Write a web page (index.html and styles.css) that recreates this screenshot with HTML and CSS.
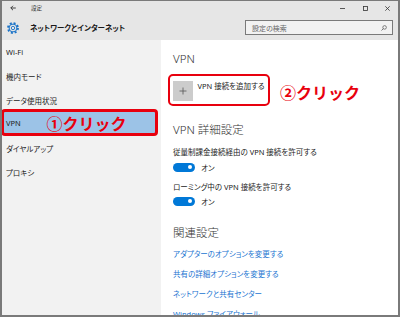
FILE: index.html
```html
<!DOCTYPE html>
<html lang="ja">
<head>
<meta charset="utf-8">
<link rel="stylesheet" href="styles.css">
</head>
<body>
<div class="window">
  <header class="header">
    <div class="titlebar">
      <svg class="back" width="6" height="6" viewBox="0 0 6 6"><path d="M5.8 3H0.8M3 0.8L0.8 3L3 5.2" fill="none" stroke="#333" stroke-width="0.9"/></svg>
      <span class="wintitle">設定</span>
      <div class="controls">
        <svg class="ctl" width="5" height="5" viewBox="0 0 5 5"><path d="M0 2.5H5" stroke="#333" stroke-width="0.8"/></svg>
        <svg class="ctl max" width="5" height="5" viewBox="0 0 5 5"><rect x="0.5" y="0.5" width="4" height="4" fill="none" stroke="#333" stroke-width="0.8"/></svg>
        <svg class="ctl close" width="5" height="5" viewBox="0 0 5 5"><path d="M0.3 0.3L4.7 4.7M4.7 0.3L0.3 4.7" stroke="#333" stroke-width="0.8"/></svg>
      </div>
    </div>
    <div class="appbar">
      <svg class="gear" width="12" height="12" viewBox="0 0 12 12">
        <circle cx="6" cy="6" r="5" fill="none" stroke="#1a73c8" stroke-width="1.8" stroke-dasharray="2 1.93"/>
        <circle cx="6" cy="6" r="3.9" fill="none" stroke="#1a73c8" stroke-width="1"/>
        <circle cx="6" cy="6" r="1.7" fill="none" stroke="#1a73c8" stroke-width="0.9"/>
      </svg>
      <span class="apptitle">ネットワークとインターネット</span>
      <div class="search">
        <span class="placeholder">設定の検索</span>
        <svg class="searchicon" width="6" height="6" viewBox="0 0 6 6"><circle cx="3.6" cy="2.4" r="1.8" fill="none" stroke="#555" stroke-width="0.7"/><path d="M2.3 3.7L0.5 5.5" stroke="#555" stroke-width="0.8"/></svg>
      </div>
    </div>
  </header>
  <div class="main">
    <nav class="sidebar">
      <div class="nav-item">Wi-Fi</div>
      <div class="nav-item">機内モード</div>
      <div class="nav-item">データ使用状況</div>
      <div class="nav-item selected"><span class="nav-vpn">VPN</span><span class="annot">①クリック</span></div>
      <div class="nav-item">ダイヤルアップ</div>
      <div class="nav-item">プロキシ</div>
    </nav>
    <section class="content">
      <h2 class="heading first">VPN</h2>
      <div class="add-row">
        <div class="add-box">
          <div class="plus"><svg width="8" height="8" viewBox="0 0 8 8"><path d="M4 0.5V7.5M0.5 4H7.5" stroke="#555" stroke-width="0.8"/></svg></div>
          <span class="add-label">VPN 接続を追加する</span>
        </div>
        <span class="annot annot2">②クリック</span>
      </div>
      <h2 class="heading h-adv">VPN 詳細設定</h2>
      <p class="desc d1">従量制課金接続経由の VPN 接続を許可する</p>
      <div class="toggle-row t1"><span class="toggle"><span class="knob"></span></span><span class="toggle-text">オン</span></div>
      <p class="desc d2">ローミング中の VPN 接続を許可する</p>
      <div class="toggle-row t2"><span class="toggle"><span class="knob"></span></span><span class="toggle-text">オン</span></div>
      <h2 class="heading h-rel">関連設定</h2>
      <ul class="links">
        <li>アダプターのオプションを変更する</li>
        <li>共有の詳細オプションを変更する</li>
        <li>ネットワークと共有センター</li>
        <li>Windows ファイアウォール</li>
      </ul>
    </section>
  </div>
</div>
</body>
</html>
```

FILE: styles.css
```css
html, body {
  margin: 0;
  padding: 0;
}
body {
  font-family: "Noto Sans", "Noto Sans CJK JP", sans-serif;
  font-feature-settings: "palt";
  color: #222;
}
.window {
  width: 400px;
  height: 317px;
  box-sizing: border-box;
  border: 2px solid #7a7a7a;
  border-top-width: 1px;
  display: flex;
  flex-direction: column;
  overflow: hidden;
  background: #fff;
}
.header {
  background: #e6e6e6;
  height: 39px;
  flex: none;
}
.titlebar {
  height: 14px;
  display: flex;
  align-items: center;
  padding-left: 8px;
  padding-right: 8px;
}
.back {
  display: block;
}
.wintitle {
  margin-left: 15px;
  font-size: 5.5px;
  line-height: 8px;
  color: #333;
}
.controls {
  margin-left: auto;
  display: flex;
  align-items: center;
}
.ctl {
  display: block;
}
.max {
  margin-left: 18px;
}
.close {
  margin-left: 17px;
}
.appbar {
  height: 25px;
  display: flex;
  align-items: center;
  padding-left: 5px;
  padding-right: 5px;
}
.gear {
  display: block;
  flex: none;
}
.apptitle {
  margin-left: 11px;
  font-size: 7.5px;
  font-weight: 700;
  color: #1a1a1a;
}
.search {
  margin-left: auto;
  width: 148px;
  height: 15px;
  box-sizing: border-box;
  border: 1px solid #7a7a7a;
  background: #f2f2f2;
  display: flex;
  align-items: center;
  padding: 0 5px 0 6px;
}
.placeholder {
  font-size: 7px;
  color: #666;
}
.searchicon {
  margin-left: auto;
  display: block;
}
.main {
  flex: 1;
  display: flex;
  min-height: 0;
}
.sidebar {
  width: 159px;
  flex: none;
  background: #f2f2f2;
}
.nav-item {
  height: 24px;
  display: flex;
  align-items: center;
  padding-left: 4px;
  font-size: 7.5px;
  color: #222;
}
.nav-item.selected {
  box-sizing: border-box;
  height: 27px;
  margin: -3px 3px 0 -1px;
  border: 3px solid #e8000e;
  border-radius: 4px;
  background: #9cc3e7;
  padding-left: 2px;
  padding-top: 1px;
}
.nav-vpn {
  width: 40.5px;
  flex: none;
}
.annot {
  font-family: "Noto Sans CJK JP", sans-serif;
  font-feature-settings: normal;
  font-weight: 700;
  font-size: 16px;
  line-height: 20px;
  color: #e8000e;
}
.content {
  flex: 1;
  padding-left: 12px;
}
.heading {
  margin: 0;
  font-size: 11.5px;
  line-height: 16px;
  font-weight: 300;
  color: #333;
}
.heading.first {
  margin-top: 11px;
}
.add-row {
  margin-top: 7px;
  display: flex;
  align-items: center;
}
.add-box {
  box-sizing: border-box;
  width: 102px;
  height: 32px;
  margin-left: -5px;
  border: 2.5px solid #e8000e;
  border-radius: 5px;
  padding: 4.5px 2.5px 0;
  display: flex;
  align-items: flex-start;
}
.plus {
  width: 20px;
  height: 20px;
  background: #cccccc;
  display: flex;
  align-items: center;
  justify-content: center;
  flex: none;
}
.plus svg {
  display: block;
}
.add-label {
  margin-left: 5px;
  font-size: 7.5px;
  line-height: 10px;
  color: #222;
}
.annot2 {
  margin-left: 10px;
  margin-top: 3px;
}
.h-adv {
  margin-top: 16px;
}
.desc {
  margin: 8px 0 0;
  font-size: 7.5px;
  line-height: 12px;
  color: #222;
}
.toggle-row {
  height: 12px;
  display: flex;
  align-items: center;
}
.t1 {
  margin-top: 3px;
}
.t2 {
  margin-top: 2px;
}
.toggle {
  width: 22px;
  height: 9px;
  border-radius: 4.5px;
  background: #0078d7;
  display: flex;
  align-items: center;
  justify-content: flex-end;
  padding-right: 3px;
  box-sizing: border-box;
}
.knob {
  width: 4px;
  height: 4px;
  border-radius: 50%;
  background: #fff;
}
.toggle-text {
  margin-left: 6px;
  font-size: 7.5px;
  color: #222;
}
.h-rel {
  margin-top: 18px;
}
.links {
  list-style: none;
  margin: 7px 0 0;
  padding: 0;
  display: flex;
  flex-direction: column;
  gap: 8px;
}
.links li {
  font-size: 7.5px;
  line-height: 12px;
  color: #1a74d1;
}
```
